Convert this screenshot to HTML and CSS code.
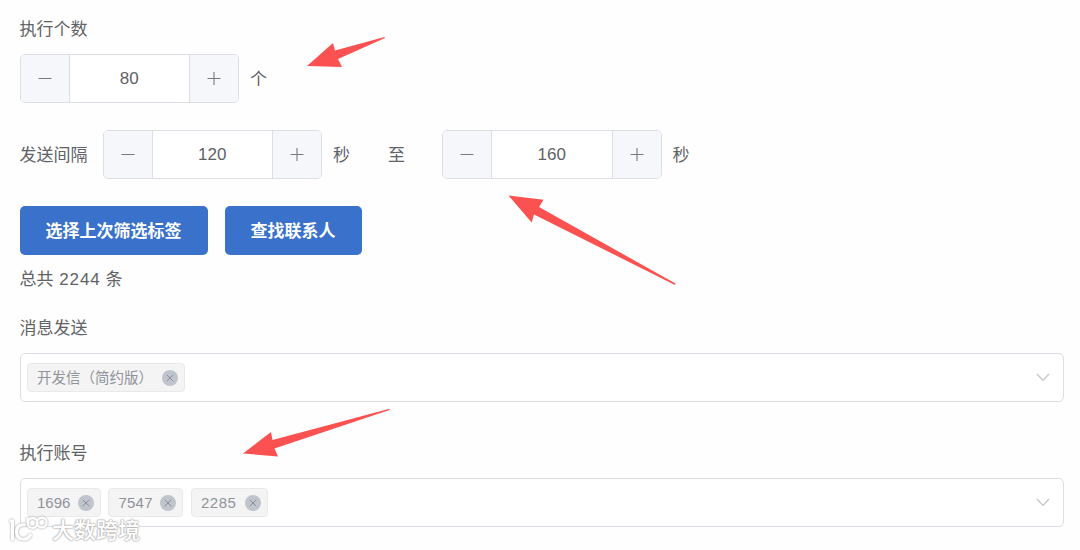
FILE: index.html
```
<!DOCTYPE html>
<html lang="zh-CN">
<head>
  <meta charset="UTF-8">
  <title>执行设置</title>
  <link rel="stylesheet" href="styles.css">
</head>
<body>
  <div class="form">
    <div class="label">执行个数</div>
    <div class="row">
      <div class="input-number">
        <span class="step"><svg width="14" height="14" viewBox="0 0 14 14"><path d="M0.5 6.500h13"/></svg></span>
        <span class="value">80</span>
        <span class="step"><svg width="14" height="14" viewBox="0 0 14 14"><path d="M0.5 6.500h13M7 0v13"/></svg></span>
      </div>
      <span class="unit">个</span>
    </div>

    <div class="row spaced">
      <span class="row-label">发送间隔</span>
      <div class="input-number">
        <span class="step"><svg width="14" height="14" viewBox="0 0 14 14"><path d="M0.5 6.500h13"/></svg></span>
        <span class="value">120</span>
        <span class="step"><svg width="14" height="14" viewBox="0 0 14 14"><path d="M0.5 6.500h13M7 0v13"/></svg></span>
      </div>
      <span class="unit">秒</span>
      <span class="to">至</span>
      <div class="input-number">
        <span class="step"><svg width="14" height="14" viewBox="0 0 14 14"><path d="M0.5 6.500h13"/></svg></span>
        <span class="value">160</span>
        <span class="step"><svg width="14" height="14" viewBox="0 0 14 14"><path d="M0.5 6.500h13M7 0v13"/></svg></span>
      </div>
      <span class="unit">秒</span>
    </div>

    <div class="row spaced buttons">
      <button class="btn btn-tags">选择上次筛选标签</button>
      <button class="btn btn-find">查找联系人</button>
    </div>
    <div class="total">总共 <span class="count">2244</span> 条</div>

    <div class="label">消息发送</div>
    <div class="select">
      <span class="tag tag-text"><span class="tag-label">开发信（简约版）</span><svg class="close" width="16" height="16" viewBox="0 0 16 16"><circle cx="8" cy="8" r="8"/><path d="M4.8 4.8l6.4 6.4M11.2 4.8l-6.4 6.4"/></svg></span>
      <svg class="caret" width="14" height="9" viewBox="0 0 14 9"><path d="M1 1l6 6.3L13 1"/></svg>
    </div>

    <div class="label spaced">执行账号</div>
    <div class="select">
      <span class="tag">1696<svg class="close" width="16" height="16" viewBox="0 0 16 16"><circle cx="8" cy="8" r="8"/><path d="M4.8 4.8l6.4 6.4M11.2 4.8l-6.4 6.4"/></svg></span>
      <span class="tag tag-mid">7547<svg class="close" width="16" height="16" viewBox="0 0 16 16"><circle cx="8" cy="8" r="8"/><path d="M4.8 4.8l6.4 6.4M11.2 4.8l-6.4 6.4"/></svg></span>
      <span class="tag tag-wide">2285<svg class="close" width="16" height="16" viewBox="0 0 16 16"><circle cx="8" cy="8" r="8"/><path d="M4.8 4.8l6.4 6.4M11.2 4.8l-6.4 6.4"/></svg></span>
      <svg class="caret" width="14" height="9" viewBox="0 0 14 9"><path d="M1 1l6 6.3L13 1"/></svg>
    </div>
  </div>

  <svg class="arrows" width="1080" height="550" viewBox="0 0 1080 550">
    <path d="M307 66L333 43L335 50.5L384.5 37L385 38L338 59L342 67Z"/>
    <path d="M508.500 195.500L543.500 199.700L539 207L675.500 283.500L675 285L534 214.500L531.700 222.500Z"/>
    <path d="M243 453.500L271 432L272.500 440L389.500 408.700L389.500 410L274.500 448.500L278 456.500Z"/>
  </svg>

  <div class="watermark">
    <svg width="40" height="30" viewBox="0 0 40 30">
      <path d="M1.500 8H4.500V27.500M17.500 12C12 10.500 8.500 14 8.500 18.500C8.500 28 19.500 28.500 23 21"/>
      <circle class="ring" cx="24.500" cy="10" r="4.800"/>
      <circle class="ring" cx="33.800" cy="9.500" r="4.800"/>
      <path class="ring" d="M19.500 4.500V10"/>
    </svg>
    <span>大数跨境</span>
  </div>
</body>
</html>
```

FILE: styles.css
```
* {
  box-sizing: border-box;
}

body {
  margin: 0;
  height: 550px;
  overflow: hidden;
  background: #fefefe;
  color: #606266;
  font-family: "Liberation Sans", "Noto Sans CJK SC", sans-serif;
  font-size: 17px;
}

.form {
  padding: 5px 16px 0 19.5px;
}

.label,
.total {
  height: 49px;
  line-height: 49px;
}

.row {
  display: flex;
  align-items: center;
  height: 49px;
}

.spaced {
  margin-top: 27px;
}

.row-label {
  width: 83px;
  padding-bottom: 3px;
}

.input-number {
  display: flex;
  width: 219.5px;
  height: 49px;
  border: 1px solid #dcdfe6;
  border-radius: 5px;
  background: #fff;
  overflow: hidden;
}

.step {
  display: flex;
  align-items: center;
  justify-content: center;
  width: 48px;
  background: #f5f7fa;
}

.step svg {
  fill: none;
  stroke: #76797f;
  stroke-width: 1.1;
}

.value {
  flex: 1;
  border-left: 1px solid #dcdfe6;
  border-right: 1px solid #dcdfe6;
  line-height: 47px;
  text-align: center;
}

.unit {
  margin-left: 11px;
  padding-bottom: 3px;
}

.to {
  margin: 0 37px 0 38px;
  padding-bottom: 3px;
}

.buttons {
  gap: 17px;
}

.btn {
  height: 49px;
  padding: 0 0 3px;
  border: none;
  border-radius: 5px;
  background: #3a71ca;
  color: #fff;
  font-family: inherit;
  font-size: 17px;
  font-weight: bold;
}

.btn-tags {
  width: 188px;
}

.btn-find {
  width: 137px;
}

.count {
  letter-spacing: 0.9px;
  margin-left: 1px;
}

.select {
  display: flex;
  align-items: center;
  gap: 7.5px;
  height: 49px;
  padding: 0 13px 0 6px;
  border: 1px solid #dcdfe6;
  border-radius: 5px;
  background: #fff;
}

.tag {
  display: flex;
  align-items: center;
  justify-content: space-between;
  height: 29px;
  width: 74px;
  padding: 0 6px 0 9.5px;
  border: 1px solid #e9e9eb;
  border-radius: 4px;
  background: #f4f4f5;
  color: #909399;
  font-size: 15px;
}

.tag-mid {
  width: 75px;
  letter-spacing: 0.2px;
}

.tag-wide {
  width: 77px;
  letter-spacing: 0.5px;
}

.tag-text {
  width: 158.5px;
  font-size: 14.5px;
}

.tag-label {
  padding-bottom: 2px;
}

.close {
  flex: none;
}

.close circle {
  fill: #c0c4cc;
}

.close path {
  fill: none;
  stroke: #8b8f97;
}

.caret {
  margin-left: auto;
  fill: none;
  stroke: #c0c4cc;
  stroke-width: 1.2;
}

/* red pointers over the form */
.arrows {
  position: absolute;
  top: 0;
  left: 0;
  fill: #fb5150;
  pointer-events: none;
}

.watermark {
  position: absolute;
  left: 8px;
  top: 513px;
  display: flex;
  gap: 4px;
  color: #fff;
  font-size: 22px;
  font-weight: 500;
  line-height: 35px;
  text-shadow: 0 0 2px #aaa, 0 0 2px #aaa, 0 0 1px #bbb;
}

.watermark svg {
  fill: none;
  stroke: #fff;
  stroke-width: 3;
  filter: drop-shadow(0 0 1px #999);
}

.watermark .ring {
  stroke-width: 2.2;
}
```
